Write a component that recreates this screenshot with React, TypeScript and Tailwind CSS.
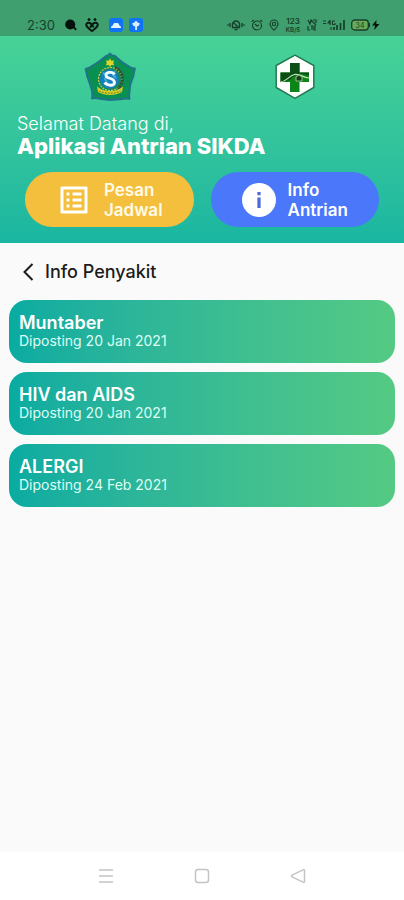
import React from "react";

type Post = { title: string; date: string };

const posts: Post[] = [
  { title: "Muntaber", date: "Diposting 20 Jan 2021" },
  { title: "HIV dan AIDS", date: "Diposting 20 Jan 2021" },
  { title: "ALERGI", date: "Diposting 24 Feb 2021" },
];

function StatusBar() {
  return (
    <div className="flex h-9 items-center justify-between bg-[#3f9f6e] pr-6 pl-[27px] pt-3.5 text-[#173f2a]">
      <div className="flex items-center gap-2">
        <span className="w-7 text-[13px] leading-4 font-normal">2:30</span>
        <svg className="ml-0.5 size-3" viewBox="0 0 12 12" fill="#04120b">
          <circle cx="5.2" cy="5.5" r="5" />
          <path d="M7 8l3.6 3.4 1.2-1.1L9 7z" />
        </svg>
        <svg className="size-3.5" viewBox="0 0 14 14" fill="none" stroke="#08190f" strokeWidth="2">
          <circle cx="4" cy="1.6" r="1" fill="#08190f" strokeWidth="1" />
          <circle cx="10" cy="1.6" r="1" fill="#08190f" strokeWidth="1" />
          <path d="M7 7.2C5.4 3.8 1 4.2 1.3 7.1 1.5 9.2 4.8 11.3 7 13c2.200-1.700 5.500-3.800 5.700-5.900C13 4.200 8.600 3.800 7 7.200L5 9.500" />
          <path d="M7 7.200l1.700 2" />
        </svg>
        <svg className="-ml-0.5 size-[22px] p-1" viewBox="0 0 14 14">
          <rect width="14" height="14" rx="3" fill="#0f73f5" />
          <path d="M2 10c0-1.500.7-2.300 2-2.700C4.200 5.600 5 5.400 5.600 5l3 .1c1 .3 1.300 1.100 1.500 2.200C11.500 7.700 12 8.500 12 10z" fill="#e4f3ff" />
        </svg>
        <svg className="-ml-2.5 size-[22px] p-1" viewBox="0 0 14 14">
          <rect width="14" height="14" rx="3" fill="#0f73f5" />
          <path d="M7 2.500l1.700 2L11 5.500 9.500 8 8 8.500V12H6.200V8.500L4.500 8 3 5.500l2.300-1z" fill="#d8edff" />
        </svg>
      </div>
      <div className="flex items-center gap-1.5">
        <svg className="h-3 w-[18px]" viewBox="0 0 18 12" fill="none" stroke="currentColor" strokeWidth="1.400">
          <path d="M5.500 8.500V5.500a3.500 3.500 0 0 1 7 0v3zM7.500 10.500h3M3 4v4M15 4v4M1 5.200v1.600M17 5.200v1.600M6 3l6 6" />
        </svg>
        <svg className="size-3" viewBox="0 0 12 12" fill="none" stroke="currentColor" strokeWidth="1.100">
          <circle cx="6" cy="6.500" r="4.500" />
          <path d="M.7 2.700l2-1.700M11.300 2.700l-2-1.700M4 5l2 2 2-1" />
        </svg>
        <svg className="h-3 w-2.5" viewBox="0 0 10 12" fill="none" stroke="currentColor" strokeWidth="1.100">
          <path d="M5 11.200C2.500 9 1 7.200 1 5a4 4 0 0 1 8 0c0 2.200-1.500 4-4 6.200z" />
          <circle cx="5" cy="5" r="1.700" />
        </svg>
        <span className="flex w-4 flex-col items-center font-semibold">
          <span className="text-[8px] leading-[10px]">123</span>
          <span className="text-[6px] leading-[8px]">KB/S</span>
        </span>
        <svg className="h-3 w-2.5" viewBox="0 0 10 12" fill="none" stroke="currentColor" strokeWidth="1.200">
          <path d="M1 1l2 4 1-4 5 5M6 1h3v3M1 7v4h2M5 7v4M4 7h2M9 7H7v4h2M7 9h2" />
        </svg>
        <svg className="h-3 w-[22px]" viewBox="0 0 22 12" fill="none" stroke="currentColor" strokeWidth="1.100">
          <path d="M0 2h3M0 4.500h3M7 1L5 4h3M7 1v5M12 2H9.500v3.500H12V4M8 11V8" />
          <path d="M11 11V8M14 11V6M17.500 11V4M21 11V1" strokeWidth="1.700" />
        </svg>
        <svg className="h-3 w-[29px]" viewBox="0 0 29 12">
          <rect x=".7" y="1" width="16.600" height="10" rx="3" fill="#68ac59" stroke="currentColor" strokeWidth="1.300" />
          <text x="9" y="8.500" textAnchor="middle" fontSize="7" fill="currentColor">34</text>
          <path d="M18 4v4" stroke="currentColor" strokeWidth="2" />
          <path d="M25.500 1L21 6.500h3L23.200 11 28.500 5h-3.200z" fill="#06150d" />
        </svg>
      </div>
    </div>
  );
}

function RegencyLogo() {
  return (
    <svg className="h-[50px] w-[52px]" viewBox="0 0 52 50" role="img" aria-label="Lambang daerah">
      <path
        d="M22 4Q25 3.500 26 1.500 27.500 3.500 31 4L38 10 45 14.500Q48 16.500 51 16.500 50 20 49.500 24L46.500 32 45.500 40Q45 44 45.500 47 42 46 39 47L26 48 14 46.500Q11 45.500 8 46.500 8.500 43 8 39L5.500 31 3 24Q2.500 20 1.500 17 5 16.500 8 14L15 9.500z"
        fill="#079052"
        stroke="#24718b"
        strokeWidth="1.800"
        strokeLinejoin="round"
      />
      <path d="M26 6.500l1.400 2.300 2.800-.4-1 2.500 1 2.300-2.800-.3L26 15l-1.400-2.100-2.800.3 1-2.300-1-2.500 2.800.4z" fill="#dbd52b" />
      <circle cx="26" cy="27" r="11.500" fill="#16865d" stroke="#c9ca55" strokeWidth="1.200" strokeDasharray="2 1" />
      <path d="M31 15.500c8 3 10 14 3 21" fill="none" stroke="#354c32" strokeWidth="3" strokeDasharray="2 1" />
      <circle cx="25.500" cy="27" r="9.500" fill="#1680bb" />
      <path d="M19 21l4 2-2 4 3 5M31 19l-2 4 3 3" fill="none" stroke="#43abd2" strokeWidth="2" />
      <path d="M30.500 22.500c-2-3.500-9-2.500-8.500 1.200.5 3 8.500 2.300 8.500 6.500 0 4-7 4-10 .5" fill="none" stroke="#f4fdff" strokeWidth="2.800" />
      <path d="M13 34.500c7 6 19 6 26 0l-1 5.500c-7 4-17 4-24 0z" fill="#d6cf27" />
      <path d="M15 39c7 3 15 3 22 0" fill="none" stroke="#8d942a" strokeWidth="1.300" strokeDasharray="2 1" />
    </svg>
  );
}

function ClinicLogo() {
  return (
    <svg className="h-[46px] w-10" viewBox="0 0 40 46" role="img" aria-label="Lambang puskesmas">
      <path d="M20 1.200L38.800 11.500v22L20 44.300 1.200 33.500v-22z" fill="#fff" stroke="#267a52" strokeWidth="1.500" strokeLinejoin="round" />
      <path d="M15 9h9.500v9.500H34v9.500h-9.500v10H15V28H5.500v-9.500H15z" fill="#0c8418" />
      <path d="M15 9h9.500v9.500H34v3l-9-2-6 2.500-4 4-9.500 2v-9.500H15z" fill="#0b4f17" />
      <path d="M5.500 28c6-.5 8-6 14-7.500 5-1.200 8 3 14.500 3.500" fill="none" stroke="#c9e3bd" strokeWidth="1.100" />
      <path d="M21 23l3-2 3 2v4h-6z" fill="#183c16" stroke="#c9e3bd" strokeWidth=".7" />
    </svg>
  );
}

function Header() {
  return (
    <header className="bg-linear-to-b from-[#47d296] to-[#19b6a1] pt-4 pb-4">
      <div className="flex h-[50px] items-center justify-around pr-5 pl-3.5">
        <RegencyLogo />
        <ClinicLogo />
      </div>
      <div className="mt-[11px] px-[17px] text-white">
        <p className="text-lg leading-[22px] font-light">Selamat Datang di,</p>
        <h1 className="text-[22px] leading-[22px] font-extrabold">Aplikasi Antrian SIKDA</h1>
      </div>
      <div className="mt-[15px] grid grid-cols-2 gap-[17px] px-[25px]">
        <button type="button" className="flex h-[55px] items-center justify-center gap-3 rounded-full bg-[#f3bf3d] text-left text-[17px] leading-5 font-semibold text-[#fffbe8]">
          <svg className="size-9" viewBox="0 0 24 24" fill="#fff" aria-hidden="true">
            <path d="M19 5v14H5V5h14m1.100-2H3.900c-.5 0-.9.400-.9.900v16.200c0 .400.400.900.900.900h16.200c.400 0 .900-.500.900-.900V3.900c0-.500-.500-.900-.900-.900zM11 7h6v2h-6V7zm0 4h6v2h-6v-2zm0 4h6v2h-6v-2zM7 7h2v2H7V7zm0 4h2v2H7v-2zm0 4h2v2H7v-2z" />
          </svg>
          <span>Pesan<br />Jadwal</span>
        </button>
        <button type="button" className="flex h-[55px] items-center justify-center gap-3 rounded-full bg-[#4b77fa] text-left text-[17px] leading-5 font-semibold text-white">
          <svg className="size-[34px]" viewBox="0 0 34 34" aria-hidden="true">
            <circle cx="17" cy="17" r="17" fill="#fff" />
            <path d="M15.400 9h3.200v3.200h-3.200zM15.400 14.500h3.200V25h-3.200z" fill="#4b69d8" />
          </svg>
          <span>Info<br />Antrian</span>
        </button>
      </div>
    </header>
  );
}

function PostCard({ post }: { post: Post }) {
  return (
    <li className="h-[63px] rounded-[18px] bg-linear-to-r from-[#08aba2] to-[#54ca83] px-2.5 pt-3.5 text-white">
      <h3 className="text-lg leading-[18px] font-semibold">{post.title}</h3>
      <p className="text-sm leading-[18px] font-normal text-[#dcfff4]">{post.date}</p>
    </li>
  );
}

function NavBar() {
  return (
    <nav className="flex h-12 items-center justify-center gap-20 bg-white text-[#c4c4c4]">
      <button type="button" aria-label="Menu">
        <svg className="size-4" viewBox="0 0 16 16" stroke="currentColor" strokeWidth="1.500">
          <path d="M1 2h14M1 8h14M1 14h14" />
        </svg>
      </button>
      <button type="button" aria-label="Beranda">
        <svg className="size-4" viewBox="0 0 16 16" fill="none" stroke="currentColor" strokeWidth="1.500">
          <rect x="1.500" y="1.500" width="13" height="13" rx="2.500" />
        </svg>
      </button>
      <button type="button" aria-label="Kembali">
        <svg className="size-4" viewBox="0 0 16 16" fill="none" stroke="currentColor" strokeWidth="1.500" strokeLinejoin="round">
          <path d="M14.500 2.500v11q0 1.500-1.500.7L2 8.800Q1 8 2 7.200l11-5.400q1.500-.800 1.500.7z" />
        </svg>
      </button>
    </nav>
  );
}

export default function App() {
  return (
    <div className="flex min-h-screen flex-col bg-[#fafafa] font-['Inter',sans-serif]">
      <StatusBar />
      <Header />
      <main className="grow px-[9px]">
        <div className="flex h-[57px] items-center gap-2 pl-3 text-[#1c1c1c]">
          <button type="button" aria-label="Kembali ke halaman sebelumnya">
            <svg className="h-5 w-4" viewBox="0 0 16 20" fill="none" stroke="currentColor" strokeWidth="2">
              <path d="M11.500 2L3.500 10l8 8" />
            </svg>
          </button>
          <h2 className="text-lg leading-6 font-medium">Info Penyakit</h2>
        </div>
        <ul className="flex flex-col gap-[9px]">
          {posts.map((post) => (
            <PostCard key={post.title} post={post} />
          ))}
        </ul>
      </main>
      <NavBar />
    </div>
  );
}
